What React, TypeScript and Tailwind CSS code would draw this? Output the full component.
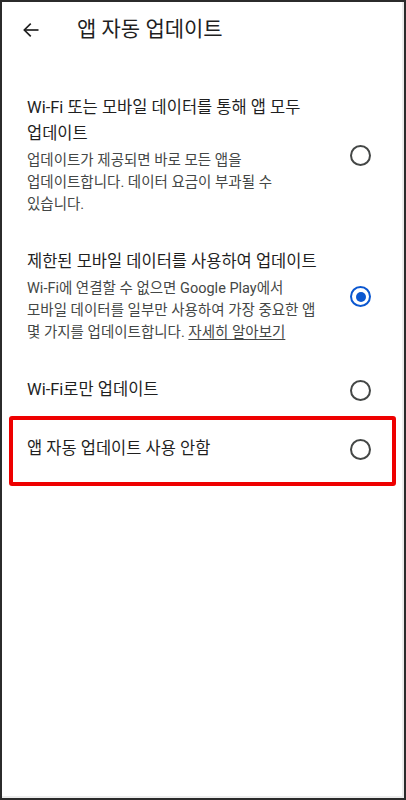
import { ReactNode } from 'react';

interface Option {
  id: string;
  title: ReactNode;
  description?: ReactNode;
  selected: boolean;
  highlighted?: boolean;
}

const options: Option[] = [
  {
    id: 'any',
    title: (
      <>
        Wi-Fi 또는 모바일 데이터를 통해 앱 모두
        <br />
        업데이트
      </>
    ),
    description: (
      <>
        업데이트가 제공되면 바로 모든 앱을
        <br />
        업데이트합니다. 데이터 요금이 부과될 수
        <br />
        있습니다.
      </>
    ),
    selected: false,
  },
  {
    id: 'limited',
    title: '제한된 모바일 데이터를 사용하여 업데이트',
    description: (
      <>
        Wi-Fi에 연결할 수 없으면 Google Play에서
        <br />
        모바일 데이터를 일부만 사용하여 가장 중요한 앱
        <br />
        몇 가지를 업데이트합니다. <span className="underline underline-offset-2">자세히 알아보기</span>
      </>
    ),
    selected: true,
  },
  { id: 'wifi', title: 'Wi-Fi로만 업데이트', selected: false },
  { id: 'off', title: '앱 자동 업데이트 사용 안함', selected: false, highlighted: true },
];

function Radio({ checked }: { checked: boolean }) {
  if (checked) {
    return (
      <div className="w-[21px] h-[21px] rounded-full border-[2.5px] border-[#0b57d0] flex items-center justify-center">
        <div className="w-[10px] h-[10px] rounded-full bg-[#0b57d0]" />
      </div>
    );
  }
  return <div className="w-[21px] h-[21px] rounded-full border-2 border-[#444746]" />;
}

export default function App() {
  return (
    <div
      className="w-[406px] h-[800px] bg-white border-2 border-[#2b2b2b] overflow-hidden"
      style={{ fontFamily: 'Roboto, "Noto Sans CJK KR", sans-serif' }}
    >
      <div className="h-full border-r-2 border-b-2 border-[#ececec]">
        {/* header */}
        <div className="h-[56px] flex items-center">
          <div className="w-[75px] pl-[19px] flex items-center">
            <svg width="20" height="20" viewBox="0 0 24 24" fill="none" stroke="#1f1f1f" strokeWidth="2" strokeLinecap="square">
              <path d="M20 12H5" />
              <path d="M11 5l-7 7 7 7" strokeLinejoin="miter" />
            </svg>
          </div>
          <h1 className="text-[21px] text-[#1f1f1f]">앱 자동 업데이트</h1>
        </div>

        <div className="pt-[20px]">
          {options.map((opt) => (
            <div key={opt.id} className="relative">
              <div className="flex items-center pl-[25px] pr-[31px] pt-[17px] pb-[16px]">
                <div className="flex-1">
                  <div className="text-[16.5px] leading-[26px] text-[#1f1f1f]">{opt.title}</div>
                  {opt.description && (
                    <div className="mt-[3px] text-[14.5px] leading-[22px] text-[#444746]">{opt.description}</div>
                  )}
                </div>
                <Radio checked={opt.selected} />
              </div>
              {opt.highlighted && (
                <div className="absolute left-[7px] right-[6px] top-[-3px] bottom-[-8px] border-4 border-[#ee0000] rounded-[3px]" />
              )}
            </div>
          ))}
        </div>
      </div>
    </div>
  );
}
